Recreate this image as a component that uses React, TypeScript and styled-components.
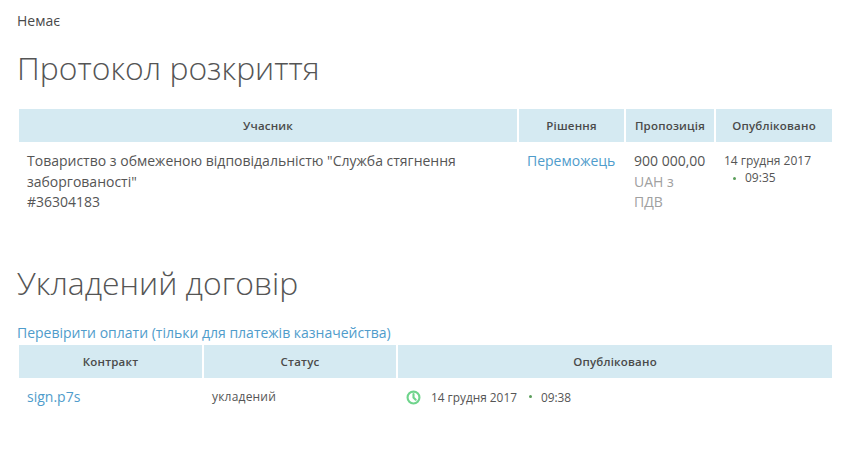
import React from "react";
import styled, { createGlobalStyle } from "styled-components";

const GlobalStyle = createGlobalStyle`
  html, body {
    margin: 0;
    padding: 0;
    background: #fff;
    color: #4a4a4a;
    font-family: "Open Sans", "DejaVu Sans", sans-serif;
  }
`;

const Page = styled.div`
  width: 865px;
  height: 457px;
  box-sizing: border-box;
  padding: 13px 31px 0 17px;
  overflow: hidden;
`;

const Note = styled.p`
  margin: 0;
  font-size: 14px;
  line-height: 16px;
  color: #4a4a4a;
`;

const Title = styled.h2<{ $top: number }>`
  margin: ${(p) => p.$top}px 0 0;
  font-size: 31.9px;
  line-height: 44px;
  font-weight: 300;
  color: #555;
`;

const Table = styled.table<{ $top: number }>`
  width: 817px;
  margin: ${(p) => p.$top}px 0 0;
  table-layout: fixed;
  border-collapse: separate;
  border-spacing: 2px 0;
`;

const Head = styled.th`
  height: 33px;
  padding: 0;
  background: #d5eaf2;
  font-size: 11.5px;
  font-weight: 600;
  letter-spacing: 0.2px;
  color: #4a4a4a;
  text-align: center;
`;

const Cell = styled.td`
  padding: 9.2px 8px 0;
  vertical-align: top;
  font-size: 14px;
  line-height: 20.4px;
  color: #555;
`;

const DateCell = styled(Cell)`
  padding-top: 10px;
  font-size: 12px;
  line-height: 17px;
`;

const Muted = styled.div`
  color: #a0a0a0;
`;

const Link = styled.a`
  color: #4f9ccb;
  text-decoration: none;
  font-size: 14px;
`;

const TopLink = styled(Link)`
  display: block;
  margin-top: 18px;
  line-height: 20px;
`;

const Dot = styled.span<{ $wide?: boolean }>`
  display: inline-block;
  width: 3px;
  height: 3px;
  margin: 0 ${(p) => (p.$wide ? "9px 2px 12px" : "9px 2px 9px")};
  border-radius: 50%;
  background: #5a9e5a;
`;

const FileCell = styled(Cell)`
  padding-top: 9px;
`;

const StatusCell = styled(Cell)`
  padding-top: 9px;
  font-size: 12px;
  line-height: 20px;
  letter-spacing: 0.2px;
`;

const FileLink = styled(Link)`
  line-height: 20px;
`;

const PublishedRow = styled.div`
  display: flex;
  align-items: center;
  height: 20px;
  font-size: 11.85px;
  letter-spacing: 0;
  color: #555;
`;

const ClockIcon = styled.svg`
  width: 15px;
  height: 15px;
  margin-right: 10px;
`;

const App: React.FC = () => (
  <Page>
    <GlobalStyle />
    <Note>Немає</Note>
    <Title $top={17}>Протокол розкриття</Title>
    <Table $top={19}>
      <colgroup>
        <col style={{ width: 498 }} />
        <col style={{ width: 105 }} />
        <col style={{ width: 88 }} />
        <col style={{ width: 116 }} />
      </colgroup>
      <thead>
        <tr>
          <Head>Учасник</Head>
          <Head>Рішення</Head>
          <Head>Пропозиція</Head>
          <Head>Опубліковано</Head>
        </tr>
      </thead>
      <tbody>
        <tr>
          <Cell>
            Товариство з обмеженою відповідальністю "Служба стягнення заборгованості"
            <br />
            #36304183
          </Cell>
          <Cell>
            <Link href="#">Переможець</Link>
          </Cell>
          <Cell>
            900 000,00
            <Muted>UAH з ПДВ</Muted>
          </Cell>
          <DateCell>
            14 грудня 2017
            <br />
            <Dot />
            09:35
          </DateCell>
        </tr>
      </tbody>
    </Table>
    <Title $top={49}>Укладений договір</Title>
    <TopLink href="#">Перевірити оплати (тільки для платежів казначейства)</TopLink>
    <Table $top={2}>
      <colgroup>
        <col style={{ width: 183 }} />
        <col style={{ width: 192 }} />
        <col style={{ width: 434 }} />
      </colgroup>
      <thead>
        <tr>
          <Head>Контракт</Head>
          <Head>Статус</Head>
          <Head>Опубліковано</Head>
        </tr>
      </thead>
      <tbody>
        <tr>
          <FileCell>
            <FileLink href="#">sign.p7s</FileLink>
          </FileCell>
          <StatusCell>укладений</StatusCell>
          <StatusCell>
            <PublishedRow>
              <ClockIcon viewBox="0 0 24 24" fill="none" stroke="#6fd48c" strokeWidth="3.4" strokeLinecap="round">
                <circle cx="12" cy="12" r="9.5" />
                <path d="M12 6.5V12l3.5 3.5" />
              </ClockIcon>
              14 грудня 2017
              <Dot $wide />
              09:38
            </PublishedRow>
          </StatusCell>
        </tr>
      </tbody>
    </Table>
  </Page>
);

export default App;
